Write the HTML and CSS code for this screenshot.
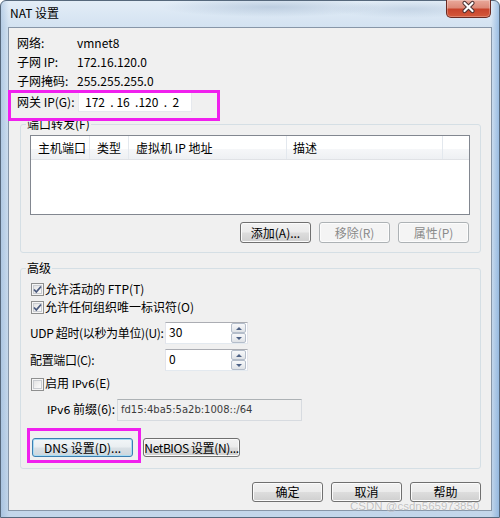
FILE: index.html
```html
<!DOCTYPE html>
<html lang="zh-CN">
<head>
<meta charset="utf-8">
<title>NAT 设置</title>
<link rel="stylesheet" href="styles.css">
</head>
<body>
<div class="window">
  <div class="titlebar">
    <span class="title">NAT 设置</span>
    <div class="close">
      <svg width="45" height="18" viewBox="0 0 45 18">
        <path d="M18.5 4 L26.5 12 M26.5 4 L18.5 12" stroke="#4a3030" stroke-width="4.2" stroke-linecap="round"/>
        <path d="M18.5 4 L26.5 12 M26.5 4 L18.5 12" stroke="#ffffff" stroke-width="2.2" stroke-linecap="round"/>
      </svg>
    </div>
  </div>
  <div class="client">
    <div class="info">
      <span>网络:</span><span>vmnet8</span>
      <span>子网 IP:</span><span>172.16.120.0</span>
      <span>子网掩码:</span><span>255.255.255.0</span>
      <span>网关 IP(G):</span><span class="ipbox">172&nbsp;&nbsp;.&nbsp;16&nbsp;&nbsp;.120&nbsp;&nbsp;.&nbsp;&nbsp;2</span>
    </div>

    <fieldset class="group g1">
      <legend>端口转发(F)</legend>
      <div class="list">
        <div class="lhead">
          <span class="col c1">主机端口</span>
          <span class="col c2">类型</span>
          <span class="col c3">虚拟机 IP 地址</span>
          <span class="col c4">描述</span>
          <span class="col c5"></span>
        </div>
      </div>
      <div class="btnrow">
        <button class="btn">添加(A)...</button>
        <button class="btn" disabled>移除(R)</button>
        <button class="btn" disabled>属性(P)</button>
      </div>
    </fieldset>

    <fieldset class="group g2">
      <legend>高级</legend>
      <div class="cbrow"><span class="cb checked"><svg width="11" height="11" viewBox="0 0 11 11"><path d="M2 5.5 L4.3 8 L9 2.5" fill="none" stroke="#4a5a7e" stroke-width="1.8"/></svg></span><span>允许活动的 FTP(T)</span></div>
      <div class="cbrow"><span class="cb checked"><svg width="11" height="11" viewBox="0 0 11 11"><path d="M2 5.5 L4.3 8 L9 2.5" fill="none" stroke="#4a5a7e" stroke-width="1.8"/></svg></span><span>允许任何组织唯一标识符(O)</span></div>
      <div class="frow first">
        <span class="flabel">UDP 超时(以秒为单位)(U):</span>
        <div class="spinbox"><span class="sval">30</span><div class="spin"><span class="sb"><i class="up"></i></span><span class="sb"><i class="down"></i></span></div></div>
      </div>
      <div class="frow second">
        <span class="flabel">配置端口(C):</span>
        <div class="spinbox"><span class="sval">0</span><div class="spin"><span class="sb"><i class="up"></i></span><span class="sb"><i class="down"></i></span></div></div>
      </div>
      <div class="cbrow ipv6"><span class="cb"></span><span>启用 <span class="lat">IPv6</span>(E)</span></div>
      <div class="frow prefix">
        <span class="plabel"><span class="lat">IPv6</span> 前缀(6):</span>
        <div class="pbox">fd15:4ba5:5a2b:1008::/64</div>
      </div>
      <div class="dnsrow">
        <button class="btn default dns">DNS 设置(D)...</button>
        <button class="btn netbios">NetBIOS 设置(N)...</button>
      </div>
    </fieldset>

    <div class="footer">
      <button class="btn">确定</button>
      <button class="btn">取消</button>
      <button class="btn">帮助</button>
    </div>

    <div class="mark mark1"></div>
    <div class="mark mark2"></div>
  </div>
  <div class="watermark">CSDN @csdn565973850</div>
</div>
</body>
</html>
```
FILE: styles.css
```css
* { box-sizing: border-box; }
html, body { margin: 0; padding: 0; }
body {
  width: 500px;
  height: 518px;
  overflow: hidden;
  font-family: "Noto Sans CJK SC", "Microsoft YaHei", sans-serif;
  font-size: 12px;
  color: #000;
  background: #ffffff;
}
.window {
  position: relative;
  width: 500px;
  height: 518px;
  border: 1px solid #56687c;
  border-radius: 6px 6px 0 0;
  background:
    radial-gradient(ellipse 110px 10px at 270px 6px, rgba(110,140,175,0.3), transparent),
    radial-gradient(ellipse 80px 9px at 410px 8px, rgba(110,140,175,0.22), transparent),
    linear-gradient(90deg, rgba(120,160,205,0.35) 0, rgba(255,255,255,0) 8px, rgba(255,255,255,0) 490px, rgba(110,160,215,0.55) 100%),
    linear-gradient(180deg, #e3edf7 0, #d3e2f1 26px, #c3d6ea 100%);
}
.titlebar {
  height: 26px;
  display: flex;
  align-items: flex-start;
}
.title {
  padding-left: 9px;
  line-height: 24px;
  font-size: 12px;
}
.close {
  margin-left: auto;
  margin-right: 8px;
  margin-top: -1px;
  width: 45px;
  height: 18px;
  border: 1px solid #6a2a22;
  border-top: none;
  border-radius: 0 0 5px 5px;
  background: linear-gradient(180deg, #e9a99b 0%, #dd8a78 45%, #c8442c 55%, #d4593a 100%);
  box-shadow: inset 0 0 0 1px rgba(255,255,255,0.25);
}
.close svg { display: block; margin: -1px 0 0 -1px; }

.client {
  position: relative;
  margin-left: 7px;
  width: 484px;
  height: 484px;
  border: 1px solid #8796a8;
  background: #f0f0f0;
}

.info {
  display: grid;
  grid-template-columns: 60px 1fr;
  grid-template-rows: 19px 19px 19px 24px;
  align-items: center;
  padding: 5px 0 0 8px;
  line-height: 16px;
}
.ipbox {
  margin-left: 1px;
  width: 114px;
  height: 20px;
  line-height: 18px;
  padding-left: 6px;
  background: #fff;
  border: 1px solid #e6e9ee;
  border-top-color: #dcdfe4;
}

.group {
  margin: 3px 10px 0 11px;
  padding: 4px 10px 9px 9px;
  border: 1px solid #d5dfe5;
  border-radius: 3px;
  min-width: 0;
}
.group legend {
  margin-left: -4px;
  padding: 0 1px;
  line-height: 14px;
  font-size: 12px;
}
.g2 {
  margin-top: 8px;
  padding: 5px 10px 11px 9px;
}

.list {
  height: 80px;
  border: 1px solid #828790;
  background: #fff;
}
.lhead {
  display: flex;
  height: 24px;
  border-bottom: 1px solid #e0e2e6;
  background: linear-gradient(180deg, #ffffff 0%, #ffffff 55%, #f6f7f9 56%, #eef0f3 100%);
}
.col {
  height: 23px;
  line-height: 23px;
  padding-left: 7px;
  border-right: 1px solid #e3e8ee;
  white-space: nowrap;
}
.c1 { width: 59px; }
.c2 { width: 39px; }
.c3 { width: 158px; }
.c4 { width: 156px; padding-left: 6px; }
.c5 { flex: 1; border-right: none; }

.btn {
  font-family: inherit;
  font-size: 12px;
  color: #000;
  width: 71px;
  height: 21px;
  padding: 0;
  line-height: 18px;
  white-space: nowrap;
  overflow: hidden;
  border: 1px solid #707070;
  border-radius: 3px;
  background: linear-gradient(180deg, #f2f2f2 0%, #ebebeb 48%, #dddddd 52%, #cfcfcf 100%);
  box-shadow: inset 0 0 0 1px #fbfbfb;
}
.btn:disabled {
  color: #8a8a8a;
  border-color: #adb2b5;
  background: #f4f4f4;
  box-shadow: inset 0 0 0 1px #fcfcfc;
}
.btnrow {
  display: flex;
  justify-content: flex-end;
  gap: 8px;
  margin-top: 7px;
  padding-right: 1px;
}

.cbrow {
  display: flex;
  align-items: center;
  height: 18px;
  line-height: 16px;
}
.cb {
  width: 13px;
  height: 13px;
  margin: 0 1px 0 1px;
  border: 1px solid #8e8f8f;
  background: linear-gradient(135deg, #dcdcdc 0%, #f4f4f4 60%, #ffffff 100%);
  box-shadow: inset 0 0 0 1px #f5f5f5, inset 0 0 0 2px #c9ccd1;
  display: flex;
  align-items: center;
  justify-content: center;
}
.cb svg { display: block; }
.ipv6 { margin-top: 4px; }
.lat { font-family: "DejaVu Sans", sans-serif; font-size: 11px; }

.frow {
  display: flex;
  align-items: center;
  height: 22px;
  line-height: 16px;
}
.frow.first { margin-top: 6px; }
.frow.second { margin-top: 5px; }
.flabel { width: 135px; white-space: nowrap; letter-spacing: -0.35px; }
.spinbox {
  position: relative;
  display: flex;
  width: 83px;
  height: 22px;
  background: #fff;
  border: 1px solid #e2e3ea;
  border-top-color: #abadb3;
  border-bottom-color: #e3e9ef;
}
.sval {
  flex: 1;
  padding: 1px 0 0 3px;
  line-height: 16px;
}
.spin {
  display: flex;
  flex-direction: column;
  width: 16px;
  padding: 0 1px 0 0;
}
.sb {
  height: 10px;
  border: 1px solid #b4bdca;
  border-radius: 2px;
  background: linear-gradient(180deg, #f7f8fa 0%, #eceef1 50%, #dfe2e6 100%);
  display: flex;
  align-items: center;
  justify-content: center;
}
.sb i {
  width: 0;
  height: 0;
  border-left: 3px solid transparent;
  border-right: 3px solid transparent;
}
.sb .up { border-bottom: 3px solid #4d6185; }
.sb .down { border-top: 3px solid #4d6185; }

.prefix { margin-top: 6px; }
.plabel { width: 87px; padding-left: 17px; white-space: nowrap; }
.pbox {
  width: 185px;
  height: 22px;
  padding: 2px 0 0 3px;
  line-height: 16px;
  font-family: "DejaVu Sans", sans-serif;
  font-size: 10px;
  color: #3c3c3c;
  background: #f0f0f0;
  border: 1px solid #d7dbe0;
  border-top-color: #adb2b5;
}

.dnsrow {
  display: flex;
  margin-top: 17px;
  height: 19px;
}
.dnsrow .btn { height: 19px; line-height: 16px; }
.dns { width: 101px; margin-left: 2px; }
.netbios { width: 97px; margin-left: 10px; letter-spacing: -0.4px; }
.btn.default {
  border-color: #3c7fb1;
  box-shadow: inset 0 0 0 1px #a7dcf4;
  background: linear-gradient(180deg, #f2f6f8 0%, #e9eef1 48%, #dae1e6 52%, #cdd6dc 100%);
}

.footer {
  display: flex;
  justify-content: flex-end;
  gap: 8px;
  margin: 13px 10px 0 0;
}
.footer .btn { height: 20px; }

.mark {
  position: absolute;
  border: 3px solid #f020ee;
  pointer-events: none;
}
.mark1 { left: -1px; top: 62px; width: 212px; height: 31px; }
.mark2 { left: 18px; top: 400px; width: 114px; height: 35px; }

.watermark {
  position: absolute;
  left: 349px;
  top: 498px;
  font-family: "Liberation Sans", Arial, sans-serif;
  font-size: 11.5px;
  line-height: 14px;
  color: rgba(120,120,120,0.45);
  text-shadow: 0 0 1px rgba(255,255,255,0.8);
  white-space: nowrap;
}
```
